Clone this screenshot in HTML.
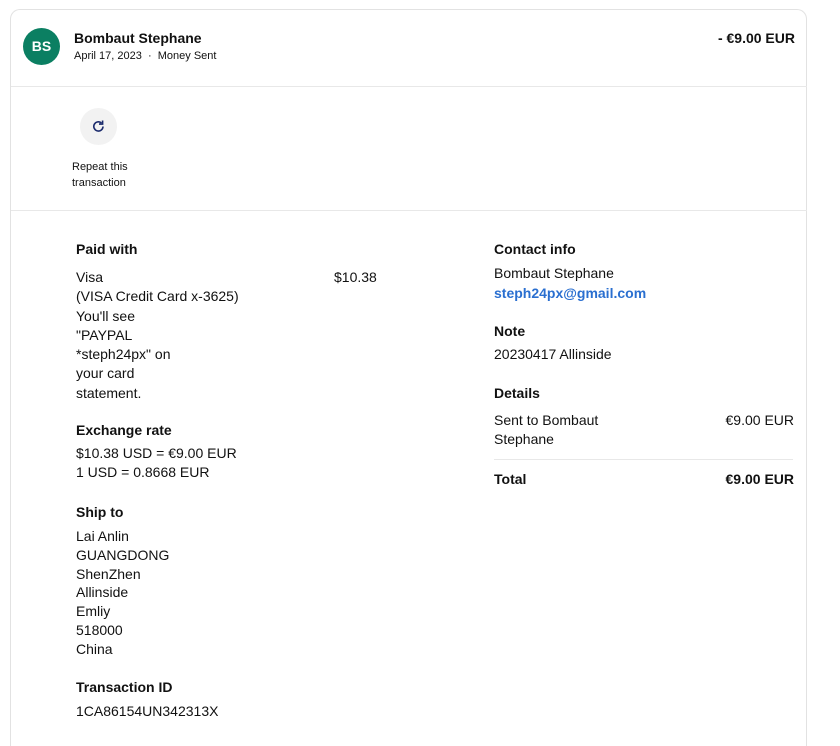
<!DOCTYPE html><html><head><style>
html,body{margin:0;width:840px;height:746px;overflow:hidden}
body{background:#fff;font-family:"Liberation Sans",sans-serif;color:#111;position:relative}
.card{position:absolute;left:10px;top:9px;width:797px;height:737px;border:1px solid #e2e2e2;border-bottom:none;border-radius:10px 10px 0 0;background:#fff;box-sizing:border-box}
.t{position:absolute;font-size:14px;line-height:19px;white-space:nowrap}
.b{font-weight:bold}
.hr{position:absolute;height:1px;background:#e8e8e8}
</style></head><body>
<div class="card"></div>
<div style="position:absolute;left:23px;top:28px;width:37px;height:37px;border-radius:50%;background:#0b7f62;color:#fff;font-weight:bold;font-size:14px;line-height:37px;text-align:center">BS</div>
<div class="t b" style="left:74px;top:29px">Bombaut Stephane</div>
<div class="t" style="left:74px;top:48px;font-size:11px;line-height:16px">April 17, 2023 &nbsp;·&nbsp; Money Sent</div>
<div class="t b" style="right:45px;top:29px">- €9.00 EUR</div>
<div class="hr" style="left:11px;width:796px;top:86px"></div>
<div style="position:absolute;left:80px;top:108px;width:37px;height:37px;border-radius:50%;background:#f2f2f2"></div>
<svg style="position:absolute;left:90px;top:118px" width="17" height="17" viewBox="0 0 17 17"><path d="M13 8.5A4.6 4.6 0 1 1 11.5 5" fill="none" stroke="#1a2a6c" stroke-width="1.6"/><path d="M12.6 2.5v3.6H9" fill="none" stroke="#1a2a6c" stroke-width="1.6"/></svg>
<div class="t" style="left:72px;top:159px;font-size:11px;line-height:16px">Repeat this<br>transaction</div>
<div class="hr" style="left:11px;width:796px;top:210px"></div>

<div class="t b" style="left:76px;top:240px">Paid with</div>
<div class="t" style="left:76px;top:268px;line-height:19.3px">Visa<br>(VISA Credit Card x-3625)<br>You'll see<br>"PAYPAL<br>*steph24px" on<br>your card<br>statement.</div>
<div class="t" style="left:334px;top:268px">$10.38</div>
<div class="t b" style="left:76px;top:421px">Exchange rate</div>
<div class="t" style="left:76px;top:444px">$10.38 USD = €9.00 EUR<br>1 USD = 0.8668 EUR</div>
<div class="t b" style="left:76px;top:503px">Ship to</div>
<div class="t" style="left:76px;top:527px;line-height:18.8px">Lai Anlin<br>GUANGDONG<br>ShenZhen<br>Allinside<br>Emliy<br>518000<br>China</div>
<div class="t b" style="left:76px;top:678px">Transaction ID</div>
<div class="t" style="left:76px;top:702px">1CA86154UN342313X</div>

<div class="t b" style="left:494px;top:240px">Contact info</div>
<div class="t" style="left:494px;top:264px">Bombaut Stephane</div>
<div class="t b" style="left:494px;top:284px;color:#2a6fd0">steph24px@gmail.com</div>
<div class="t b" style="left:494px;top:322px">Note</div>
<div class="t" style="left:494px;top:345px">20230417 Allinside</div>
<div class="t b" style="left:494px;top:384px">Details</div>
<div class="t" style="left:494px;top:411px">Sent to Bombaut<br>Stephane</div>
<div class="t" style="right:46px;top:411px">€9.00 EUR</div>
<div class="hr" style="left:494px;width:299px;top:459px"></div>
<div class="t b" style="left:494px;top:470px">Total</div>
<div class="t b" style="right:46px;top:470px">€9.00 EUR</div>
</body></html>
